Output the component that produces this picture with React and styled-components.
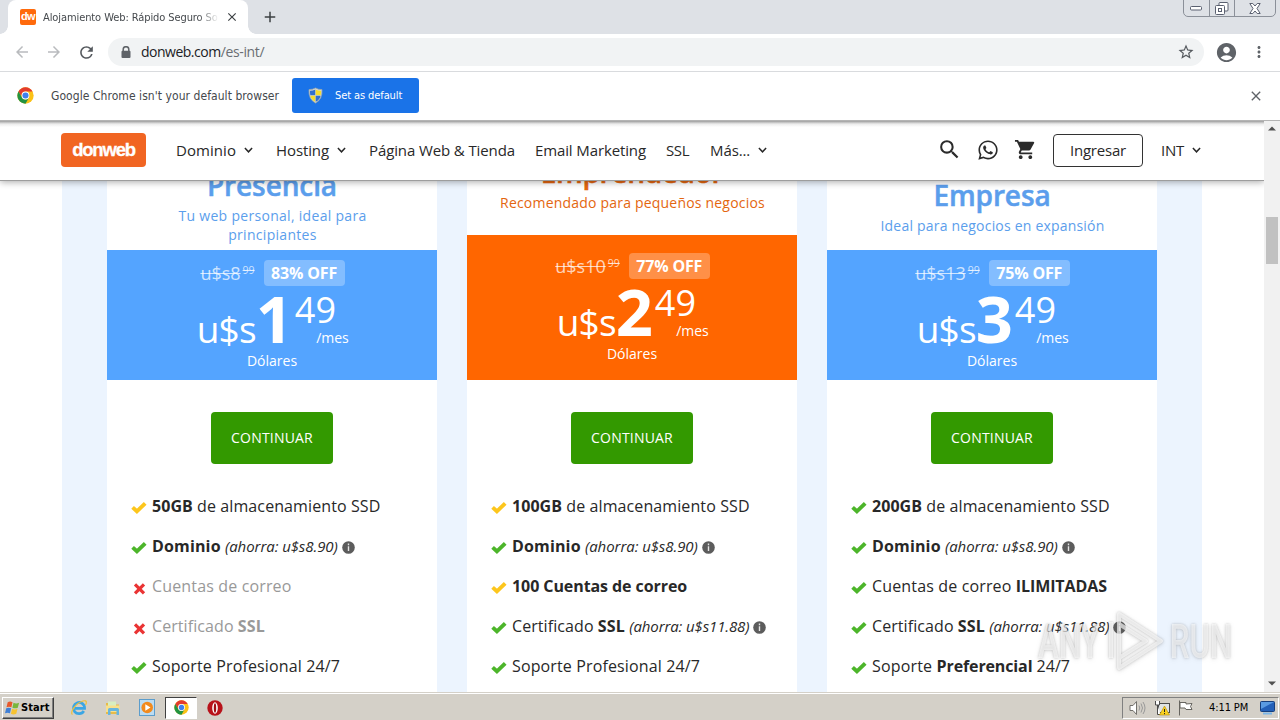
import React from "react";
import styled, { createGlobalStyle } from "styled-components";
import {
  MdSearch, MdShoppingCart, MdRefresh, MdStarBorder, MdAccountCircle,
  MdMoreVert, MdClose, MdArrowBack, MdArrowForward, MdAdd,
} from "react-icons/md";
import { FaWhatsapp } from "react-icons/fa";

const GlobalStyle = createGlobalStyle`
  * { box-sizing: border-box; }
  body { margin: 0; background: #fff; overflow: hidden; font-family: "Open Sans", sans-serif; color: #282828; }
  svg { display: block; flex: none; }
`;

const ui = `"DejaVu Sans Condensed", "DejaVu Sans", sans-serif`;

const Screen = styled.div`
  position: relative;
  width: 1280px;
  height: 720px;
  display: flex;
  flex-direction: column;
  overflow: hidden;
`;

const Label = styled.span`
  white-space: pre;
  letter-spacing: ${(p) => p.$ls || 0}px;
`;

/* ---------- browser chrome ---------- */
const TabStrip = styled.div`
  height: 34px;
  flex: none;
  background: #dee1e6;
  display: flex;
  align-items: flex-start;
  padding-left: 8px;
`;
const Tab = styled.div`
  position: relative;
  width: 240px;
  height: 34px;
  background: #fff;
  border-radius: 8px 8px 0 0;
  display: flex;
  align-items: center;
  padding-left: 12px;
  font: 11px ${ui};
  color: #45494d;
  &::before, &::after {
    content: "";
    position: absolute;
    bottom: 0;
    width: 8px;
    height: 8px;
  }
  &::before { left: -8px; background: radial-gradient(circle at 0 0, transparent 7.5px, #fff 8px); }
  &::after { right: -8px; background: radial-gradient(circle at 100% 0, transparent 7.5px, #fff 8px); }
`;
const Favicon = styled.div`
  width: 16px;
  height: 16px;
  border-radius: 2px;
  background: #ff6a0c;
  color: #fff;
  font: bold 11px/15px "Liberation Sans", sans-serif;
  letter-spacing: -0.6px;
  text-align: center;
`;
const TabTitle = styled.div`
  width: 175px;
  margin: 0 7px;
  overflow: hidden;
  white-space: nowrap;
  letter-spacing: -0.09px;
  mask-image: linear-gradient(90deg, #000 155px, transparent 176px);
`;
const NewTab = styled.div`
  margin: 8px 0 0 13px;
  color: #3c4043;
`;
const WindowButtons = styled.div`
  margin: -1px 4px 0 auto;
  height: 18px;
  display: flex;
  border: 1px solid #8b9099;
  border-radius: 0 0 5px 5px;
  color: #5a6070;
`;
const WindowButton = styled.div`
  width: ${(p) => p.$w}px;
  display: flex;
  align-items: center;
  justify-content: center;
  & + & { border-left: 1px solid #8b9099; }
`;
const Toolbar = styled.div`
  height: 38px;
  flex: none;
  display: flex;
  align-items: center;
  padding: 0 12px 1px 13px;
  border-bottom: 1px solid #d9dbde;
  color: #5f6368;
`;
const NavButtons = styled.div`
  display: flex;
  gap: 14px;
  width: 95px;
  color: #b9bbbe;
  svg:last-child { color: #55595e; }
`;
const Omnibox = styled.div`
  width: 1096px;
  height: 28px;
  border-radius: 14px;
  background: #f1f3f4;
  display: flex;
  align-items: center;
  padding: 0 9px 0 13px;
  font-size: 14px;
  color: #202124;
  svg:last-child { margin-left: auto; }
`;
const Url = styled.div`
  margin-left: 10px;
  padding-bottom: 1px;
  letter-spacing: -0.5px;
  white-space: nowrap;
`;
const Path = styled.span`
  color: #6a6e73;
  letter-spacing: -0.35px;
`;
const InfoBar = styled.div`
  height: 49px;
  flex: none;
  display: flex;
  align-items: center;
  padding: 0 16px 1px 17px;
  border-bottom: 1px solid #b4b4b4;
  font: 12px ${ui};
  color: #45484c;
  svg:last-child { margin-left: auto; }
`;
const DefaultButton = styled.div`
  width: 127px;
  height: 35px;
  margin-left: 13px;
  border-radius: 3px;
  background: #1a73e8;
  color: #fff;
  display: flex;
  align-items: center;
  gap: 12px;
  padding-left: 16px;
  font-size: 11px;
`;
const Ml = styled.div`
  margin-left: ${(p) => p.$x}px;
  display: flex;
`;

/* ---------- web page ---------- */
const Viewport = styled.div`
  height: 571px;
  flex: none;
  display: flex;
`;
const Page = styled.div`
  width: 1264px;
  display: flex;
  flex-direction: column;
  overflow: hidden;
`;
const SiteNav = styled.div`
  position: relative;
  z-index: 1;
  height: 60px;
  flex: none;
  background: linear-gradient(#9b9b9b 0, #b9b9b9 1px, #ececec 3px, #fff 6px);
  border-bottom: 1px solid #9d9d9d;
  box-shadow: 0 1px 7px rgba(0, 0, 0, 0.35);
  display: flex;
  align-items: center;
  padding: 0 0 2px 61px;
  font-size: 15px;
`;
const Logo = styled.div`
  width: 85px;
  height: 34px;
  margin-right: 30px;
  border-radius: 4px;
  background: #f16522;
  color: #fff;
  font: bold 18.5px/33px "Liberation Sans", sans-serif;
  -webkit-text-stroke: 0.3px #fff;
  letter-spacing: -1.2px;
  text-align: center;
`;
const NavItem = styled.div`
  width: ${(p) => p.$w}px;
  display: flex;
  align-items: center;
  gap: 8px;
`;
const NavIcons = styled.div`
  margin-left: auto;
  display: flex;
  align-items: center;
  gap: 15px;
  color: #2b2b2b;
`;
const Login = styled.div`
  width: 90px;
  height: 33px;
  margin: 2px 18px 0 16px;
  border: 1px solid #333;
  border-radius: 4px;
  text-align: center;
  line-height: 30px;
`;
const Plans = styled.div`
  width: 1140px;
  height: 511px;
  flex: none;
  margin-left: 62px;
  padding: 0 45px;
  background: #ecf4fe;
  display: flex;
  gap: 30px;
`;
const Card = styled.div`
  width: 330px;
  background: #fff;
  display: flex;
  flex-direction: column;
  align-items: center;
`;
const CardHead = styled.div`
  width: 100%;
  height: ${(p) => p.$h}px;
  padding-bottom: ${(p) => p.$pb}px;
  flex: none;
  display: flex;
  flex-direction: column;
  align-items: center;
  justify-content: flex-end;
  text-align: center;
  color: ${(p) => p.$color};
`;
const PlanName = styled.div`
  font-size: 28px;
  font-weight: 600;
  line-height: 36px;
  padding-bottom: 3px;
  letter-spacing: ${(p) => p.$ls}px;
  -webkit-text-stroke: 0.5px currentColor;
`;
const Tagline = styled.div`
  font-size: 14px;
  line-height: 19px;
  padding-left: 1px;
  letter-spacing: ${(p) => p.$ls}px;
  white-space: pre-line;
`;
const PriceBox = styled.div`
  width: 100%;
  height: ${(p) => p.$h}px;
  padding-top: ${(p) => p.$pt}px;
  flex: none;
  background: ${(p) => p.$bg};
  color: #fff;
  display: flex;
  flex-direction: column;
  align-items: center;
`;
const OldRow = styled.div`
  display: flex;
  align-items: center;
  gap: 9px;
  height: 26px;
  padding-left: 1px;
`;
const OldPrice = styled.div`
  display: flex;
  font-size: 18px;
  line-height: 26px;
  color: rgba(255, 255, 255, 0.72);
  text-decoration: line-through;
`;
const OldCents = styled.span`
  font-size: 10.5px;
  line-height: 20px;
  padding-left: 2px;
`;
const Discount = styled.div`
  width: 81px;
  height: 26px;
  border-radius: 4px;
  background: rgba(255, 255, 255, 0.28);
  font-size: 16px;
  font-weight: bold;
  line-height: 26px;
  letter-spacing: -0.17px;
  text-align: center;
`;
const NewPrice = styled.div`
  display: flex;
  align-items: baseline;
  height: 65px;
  padding-left: 1.5px;
`;
const Currency = styled.span`
  font-size: 37px;
  letter-spacing: -0.8px;
`;
const Whole = styled.span`
  width: 39px;
  font-size: 65px;
  font-weight: bold;
  line-height: 64px;
`;
const Fraction = styled.div`
  align-self: flex-start;
  padding-top: 5px;
  width: 54px;
  display: flex;
  flex-direction: column;
  font-size: 36px;
  line-height: 37px;
`;
const Period = styled.span`
  align-self: flex-end;
  margin-top: 2px;
  font-size: 14px;
  line-height: 16px;
`;
const Money = styled.div`
  font-size: 14px;
  line-height: 20px;
`;
const Cta = styled.div`
  width: 122px;
  height: 52px;
  margin: 32px 0 22px;
  flex: none;
  border-radius: 4px;
  background: #339900;
  color: #fff;
  font-size: 14px;
  line-height: 52px;
  letter-spacing: 0.2px;
  text-align: center;
`;
const Features = styled.div`
  align-self: stretch;
  padding-left: 24px;
`;
const Feature = styled.div`
  height: 40px;
  display: flex;
  align-items: center;
  font-size: 16px;
  white-space: pre;
  color: ${(p) => (p.$off ? "#999" : "#282828")};
`;
const Mark = styled.div`
  width: 21px;
  padding-top: 3px;
`;
const Strong = styled.b`
  letter-spacing: ${(p) => p.$ls || 0}px;
`;
const Saving = styled.i`
  font-size: 15px;
  letter-spacing: ${(p) => p.$ls || -0.08}px;
  padding-right: 4px;
`;
const ScrollBar = styled.div`
  width: 16px;
  background: #f1f1f1;
  display: flex;
  flex-direction: column;
  justify-content: space-between;
  padding: 5px 0 6px;
  align-items: center;
`;
const Thumb = styled.div`
  width: 12px;
  height: 47px;
  margin: 86px 2px auto;
  background: #c1c1c1;
`;

/* ---------- taskbar ---------- */
const Taskbar = styled.div`
  height: 28px;
  flex: none;
  background: #d4d0c8;
  border-top: 1px solid #d4d0c8;
  box-shadow: inset 0 1px 0 #fff;
  display: flex;
  align-items: center;
  padding: 2px 1px 0 2px;
`;
const Start = styled.div`
  width: 52px;
  height: 22px;
  border: 1px solid;
  border-color: #fff #404040 #404040 #fff;
  box-shadow: inset -1px -1px 0 #808080;
  display: flex;
  align-items: center;
  padding-left: 1px;
  font: bold 11px ${ui};
  letter-spacing: 0.1px;
  color: #000;
`;
const Task = styled.div`
  width: ${(p) => (p.$active ? 32 : 16)}px;
  height: 22px;
  margin-left: ${(p) => p.$x}px;
  display: flex;
  align-items: center;
  justify-content: center;
  border: ${(p) => (p.$active ? "1px solid" : "0")};
  border-color: #404040 #fff #fff #404040;
  background: ${(p) => (p.$active ? "#fff" : "none")};
`;
const Tray = styled.div`
  width: 157px;
  height: 22px;
  margin-left: auto;
  border: 1px solid;
  border-color: #808080 #fff #fff #808080;
  display: flex;
  align-items: center;
  gap: 8px;
  padding-left: 6px;
  font: 11px ${ui};
  color: #000;
`;
const Clock = styled.div`
  margin-left: 7px;
  width: 43px;
  white-space: nowrap;
  letter-spacing: -0.1px;
`;

/* ---------- watermark ---------- */
const Watermark = styled.div`
  position: absolute;
  left: 1038px;
  top: 606px;
  width: 194px;
  height: 70px;
  display: flex;
  align-items: center;
  justify-content: space-between;
  color: rgba(255, 255, 255, 0.6);
  filter: drop-shadow(0 0 1px rgba(90, 90, 90, 0.45)) drop-shadow(0 1px 2px rgba(90, 90, 90, 0.25));
`;
const Word = styled.div`
  width: 64px;
  font: 500 48px/70px Roboto, sans-serif;
  padding-top: 2px;
  transform: scaleX(0.65);
  transform-origin: ${(p) => (p.$right ? "100%" : "0")} 50%;
  direction: ${(p) => (p.$right ? "rtl" : "ltr")};
`;

/* ---------- icons ---------- */
const Chevron = () => (
  <svg width="9" height="8" viewBox="0 0 9 8" fill="none" stroke="#282828" strokeWidth="1.5"><path d="M.9 2 4.5 5.8 8.1 2" /></svg>
);
const Lock = () => (
  <svg width="10" height="13" viewBox="0 0 10 13"><path d="M2.200 6V3.500a2.800 2.800 0 0 1 5.600 0V6" fill="none" stroke="#5f6368" strokeWidth="1.500" /><rect x=".5" y="4.800" width="9" height="7.200" rx="1" fill="#5f6368" /></svg>
);
const Chrome = ({ size = 17 }) => (
  <svg width={size} height={size} viewBox="0 0 48 48">
    <circle cx="24" cy="24" r="23" fill="#fbc116" />
    <path d="M4.1 12.5A23 23 0 0 1 43.9 12.5H24a11.5 11.5 0 0 0-10 17.2Z" fill="#e33b2e" />
    <path d="M4.1 12.5 14 29.7a11.5 11.5 0 0 0 20 0L24 47A23 23 0 0 1 4.1 12.5Z" fill="#229342" />
    <circle cx="24" cy="24" r="11" fill="#fff" />
    <circle cx="24" cy="24" r="8.6" fill="#3f80ed" />
  </svg>
);
const Shield = () => (
  <svg width="15" height="17" viewBox="0 0 15 17">
    <path d="M7.500 1Q10 2.600 14 2.600 14.600 12.500 7.500 16 .400 12.500 1 2.600 5 2.600 7.500 1Z" fill="#d5d9dd" stroke="#9aa7a6" strokeWidth=".8" />
    <path d="M7.300 2.600V8.300H2.300Q1.900 6 2 3.800 5 3.800 7.300 2.600Z" fill="#2f6fd0" />
    <path d="M7.700 2.600V8.300h5Q13.100 6 13 3.800 10 3.800 7.700 2.600Z" fill="#f4dc2e" />
    <path d="M7.300 8.700v6.100Q3.200 12.700 2.400 8.700Z" fill="#f4dc2e" />
    <path d="M7.700 8.700v6.100q4.100-2.100 4.900-6.100Z" fill="#2f6fd0" />
  </svg>
);
const Check = ({ color }) => (
  <svg width="16" height="14" viewBox="0 0 16 14" fill="none" stroke={color} strokeWidth="3.900"><path d="M1.600 6.400 5.900 10.300 14.200 2.300" /></svg>
);
const Cross = () => (
  <svg width="16" height="14" viewBox="0 0 16 14" fill="none" stroke="#ea3434" strokeWidth="3.200"><path d="m4 3.300 9 9M13 3.300 4 12.300" /></svg>
);
const Info = () => (
  <svg width="13" height="13" viewBox="0 0 13 13" style={{ marginTop: 2 }}>
    <circle cx="6.500" cy="6.500" r="6.300" fill="#5c5c5c" />
    <path d="M6.500 2.600v1.600M6.500 5.300v4.700" stroke="#e4e4e4" strokeWidth="1.400" />
  </svg>
);
const WinFlag = () => (
  <svg width="17" height="16" viewBox="0 0 16 16">
    <path d="M3.200 2.200Q5.600.8 8 2.200L6.900 7.300Q4.500 6 2 7.300Z" fill="#e8592b" />
    <path d="M9 2.700q2.600 1.400 5.600 0l-1.300 5Q10.500 9 7.900 7.700Z" fill="#79b63c" />
    <path d="M1.700 8.300q2.500-1.300 4.900 0L5.500 13.300Q3 12 .5 13.300Z" fill="#3f7fd6" />
    <path d="M7.600 8.700q2.600 1.400 5.400 0l-1.200 5q-2.900 1.400-5.400 0Z" fill="#f7c331" />
  </svg>
);
const Ie = () => (
  <svg width="18" height="18" viewBox="0 0 18 18" fill="none">
    <path d="M13.800 12A5.600 5.600 0 1 1 14.600 9.400H5" stroke="#3ba6e4" strokeWidth="2.700" />
    <path d="M2.500 15.500C-.5 14 5 4.500 13 2c4.500-1.200 3.500 2.500 2.500 4" stroke="#eebf3a" strokeWidth="1.200" />
  </svg>
);
const Explorer = () => (
  <svg width="16" height="16" viewBox="0 0 16 16">
    <path d="M1 3h5l1 1.500h7V14H1Z" fill="#e6bb4a" /><path d="M3 1.500h8V8H3Z" fill="#d8eec0" />
    <path d="M1 5.500h13.500V12H1Z" fill="#f8e08c" /><path d="M3 15V9.500Q3 8 4.500 8h8Q14 8 14 9.500V15h-2.500v-4h-6v4Z" fill="#66b5df" />
  </svg>
);
const Player = () => (
  <svg width="17" height="17" viewBox="0 0 17 17">
    <rect x=".5" y=".5" width="15" height="16" fill="#bcdcf2" stroke="#5c9dcc" />
    <circle cx="8.200" cy="8.500" r="5.800" fill="#f28a1d" /><path d="m6.300 5.200 5.200 3.300-5.200 3.300Z" fill="#fff" />
  </svg>
);
const Opera = () => (
  <svg width="16" height="16" viewBox="0 0 16 16">
    <circle cx="8" cy="8" r="7.700" fill="#b8121a" /><ellipse cx="8" cy="8" rx="2.800" ry="5.700" fill="#fff" />
    <ellipse cx="8" cy="8" rx="1.200" ry="4.800" fill="#a00d14" />
  </svg>
);
const Speaker = () => (
  <svg width="17" height="16" viewBox="0 0 17 16" fill="none" stroke="#73716c">
    <path d="M1 5.500h3l3.500-4v13L4 10.500H1Z" fill="#fff" /><path d="M10 5.500q1.500 2.500 0 5M12 3.500q3 4.500 0 9M14 2q4 6 0 12" stroke="#999" />
  </svg>
);
const Network = () => (
  <svg width="16" height="16" viewBox="0 0 16 16">
    <rect x="4.500" y="3.500" width="11" height="9" fill="#dfe3e4" stroke="#4b4b4b" />
    <path d="M1.500 1v4h4V1M3.500 5v9.500h3" fill="#fff" stroke="#4b4b4b" />
    <path d="m10.500 6 5 9h-10Z" fill="#f9d01f" stroke="#b68d0a" strokeWidth=".6" /><path d="M10.500 9v3M10.500 13v1.200" stroke="#222" />
  </svg>
);
const Flag = () => (
  <svg width="16" height="16" viewBox="0 0 16 16" fill="#fff" stroke="#66645f">
    <path d="M1.500.5v15M2 2.500h6v1.500l6-.5-1.500 3L14 9.500H8L7 8H2Z" />
  </svg>
);
const Desktop = () => (
  <svg width="15" height="14" viewBox="0 0 15 14">
    <rect x=".5" y=".5" width="14" height="10" rx="1" fill="#2360b8" stroke="#173f7c" />
    <path d="M1 1h13L1 8Z" fill="#5a9be2" /><path d="M3 12.500h9" stroke="#7cb7e8" strokeWidth="2" />
  </svg>
);
const Arrow = ({ up }) => (
  <svg width="8" height="5" viewBox="0 0 8 5"><path d={up ? "M0 4.500 4 .5 8 4.500Z" : "M0 .5 4 4.500 8 .5Z"} fill="#505050" /></svg>
);

const BLUE = "#54a4ff";
const GREEN = "#4cb52a";
const YELLOW = "#fdc61c";

const domain = { mark: GREEN, text: <><Strong $ls={0.15}>Dominio </Strong><Saving>(ahorra: u$s8.90)</Saving><Info /></> };
const ssl = { mark: GREEN, text: <><Label $ls={0.08}>Certificado </Label><Strong $ls={0.15}>SSL </Strong><Saving $ls={-0.12}>(ahorra: u$s11.88)</Saving><Info /></> };
const Disk = ({ size }) => <><Strong $ls={0.05}>{size}</Strong><Label $ls={0.1}> de almacenamiento SSD</Label></>;

const plans = [
  {
    name: "Presencia", nameLs: -0.1, tag: "Tu web personal, ideal para\nprincipiantes", tagLs: 0.3, headH: 69, headPb: 6,
    headColor: "#5b9eec", bg: BLUE, boxH: 130, boxPt: 10, old: "u$s8", off: "83% OFF", whole: "1",
    features: [
      { mark: YELLOW, text: <Disk size="50GB" /> },
      domain,
      { off: true, text: <Label $ls={0.15}>Cuentas de correo</Label> },
      { off: true, text: <><Label $ls={0.08}>Certificado </Label><Strong $ls={0.15}>SSL</Strong></> },
      { mark: GREEN, text: <Label $ls={0.13}>Soporte Profesional 24/7</Label> },
    ],
  },
  {
    name: "Emprendedor", nameLs: -0.3, tag: "Recomendado para pequeños negocios", tagLs: 0.2, headH: 54, headPb: 23,
    headColor: "#e4660f", bg: "#ff6600", boxH: 145, boxPt: 18, old: "u$s10", off: "77% OFF", whole: "2",
    features: [
      { mark: YELLOW, text: <Disk size="100GB" /> },
      domain,
      { mark: YELLOW, text: <Strong $ls={-0.08}>100 Cuentas de correo</Strong> },
      ssl,
      { mark: GREEN, text: <Label $ls={0.13}>Soporte Profesional 24/7</Label> },
    ],
  },
  {
    name: "Empresa", nameLs: -0.1, tag: "Ideal para negocios en expansión", tagLs: 0.2, headH: 69, headPb: 15,
    headColor: "#5b9eec", bg: BLUE, boxH: 130, boxPt: 10, old: "u$s13", off: "75% OFF", whole: "3",
    features: [
      { mark: GREEN, text: <Disk size="200GB" /> },
      domain,
      { mark: GREEN, text: <><Label $ls={0.15}>Cuentas de correo </Label><Strong $ls={-0.1}>ILIMITADAS</Strong></> },
      ssl,
      { mark: GREEN, text: <><Label $ls={0.17}>Soporte </Label><Strong $ls={-0.12}>Preferencial</Strong><span> 24/7</span></> },
    ],
  },
];

const menu = [
  { text: "Dominio", w: 100, ls: 0.06, drop: true },
  { text: "Hosting", w: 93, ls: -0.1, drop: true },
  { text: "Página Web & Tienda", w: 166, ls: -0.11 },
  { text: "Email Marketing", w: 131, ls: -0.12 },
  { text: "SSL", w: 44, ls: -0.4 },
  { text: "Más...", w: 60, ls: -0.1, drop: true },
];

const Plan = ({ p }) => (
  <Card>
    <CardHead $h={p.headH} $pb={p.headPb} $color={p.headColor}>
      <PlanName $ls={p.nameLs}>{p.name}</PlanName>
      <Tagline $ls={p.tagLs}>{p.tag}</Tagline>
    </CardHead>
    <PriceBox $h={p.boxH} $pt={p.boxPt} $bg={p.bg}>
      <OldRow>
        <OldPrice>{p.old}<OldCents>99</OldCents></OldPrice>
        <Discount>{p.off}</Discount>
      </OldRow>
      <NewPrice>
        <Currency>u$s</Currency>
        <Whole>{p.whole}</Whole>
        <Fraction>49<Period>/mes</Period></Fraction>
      </NewPrice>
      <Money>Dólares</Money>
    </PriceBox>
    <Cta>CONTINUAR</Cta>
    <Features>
      {p.features.map((f, i) => (
        <Feature key={i} $off={f.off}>
          <Mark>{f.off ? <Cross /> : <Check color={f.mark} />}</Mark>
          {f.text}
        </Feature>
      ))}
    </Features>
  </Card>
);

export default function App() {
  return (
    <Screen>
      <GlobalStyle />
      <TabStrip>
        <Tab>
          <Favicon>dw</Favicon>
          <TabTitle>Alojamiento Web: Rápido Seguro So</TabTitle>
          <MdClose size={14} color="#3c4043" />
        </Tab>
        <NewTab><MdAdd size={18} /></NewTab>
        <WindowButtons>
          <WindowButton $w={25}>
            <svg width="13" height="5" viewBox="0 0 13 5"><rect x=".5" y=".5" width="11" height="3.500" rx="1" fill="#fff" stroke="#5a6070" /></svg>
          </WindowButton>
          <WindowButton $w={25}>
            <svg width="14" height="13" viewBox="0 0 14 13" fill="#fff" stroke="#5a6070"><rect x="4" y=".5" width="9" height="8.500" rx="1" /><rect x=".5" y="3.500" width="9" height="9" rx="1" /><rect x="3.500" y="6.500" width="3" height="3" /></svg>
          </WindowButton>
          <WindowButton $w={41}>
            <svg width="12" height="11" viewBox="0 0 12 11" fill="#fff" stroke="#5a6070"><path d="M.8.500h3L6 3 8.200.500h3L8 5.500l3.200 5h-3L6 8l-2.200 2.500h-3L4 5.500Z" /></svg>
          </WindowButton>
        </WindowButtons>
      </TabStrip>
      <Toolbar>
        <NavButtons><MdArrowBack size={18} /><MdArrowForward size={18} /><MdRefresh size={19} /></NavButtons>
        <Omnibox>
          <Lock />
          <Url>donweb.com<Path>/es-int/</Path></Url>
          <MdStarBorder size={18} color="#55595e" />
        </Omnibox>
        <Ml $x={11}><MdAccountCircle size={23} /></Ml>
        <Ml $x={12}><MdMoreVert size={18} /></Ml>
      </Toolbar>
      <InfoBar>
        <Chrome />
        <Ml $x={17}><Label $ls={0.06}>Google Chrome isn't your default browser</Label></Ml>
        <DefaultButton>
          <Ml $x={0}><Shield /></Ml>
          <Label $ls={-0.1}>Set as default</Label>
        </DefaultButton>
        <MdClose size={16} color="#5f6368" />
      </InfoBar>
      <Viewport>
        <Page>
          <SiteNav>
            <Logo>donweb</Logo>
            {menu.map((m) => (
              <NavItem key={m.text} $w={m.w}><Label $ls={m.ls}>{m.text}</Label>{m.drop && <Chevron />}</NavItem>
            ))}
            <NavIcons><MdSearch size={25} /><FaWhatsapp size={22} /><MdShoppingCart size={23} /></NavIcons>
            <Login><Label $ls={-0.2}>Ingresar</Label></Login>
            <NavItem $w={103}><Label $ls={-0.2}>INT</Label><Chevron /></NavItem>
          </SiteNav>
          <Plans>{plans.map((p) => <Plan key={p.name} p={p} />)}</Plans>
        </Page>
        <ScrollBar><Arrow up /><Thumb /><Arrow /></ScrollBar>
      </Viewport>
      <Taskbar>
        <Start><WinFlag />Start</Start>
        <Task $x={17}><Ie /></Task>
        <Task $x={18}><Explorer /></Task>
        <Task $x={18}><Player /></Task>
        <Task $x={10} $active><Chrome size={15} /></Task>
        <Task $x={10}><Opera /></Task>
        <Tray><Speaker /><Network /><Flag /><Clock>4:11 PM</Clock><Desktop /></Tray>
      </Taskbar>
      <Watermark>
        <Word>ANY</Word>
        <svg width="62" height="66" viewBox="0 0 62 66" fill="none" stroke="rgba(255,255,255,.65)" strokeWidth="4" strokeLinejoin="round">
          <path d="M7 14V50M15 12v42M15 6 57 33 15 60V50L42 33 15 16Z" />
        </svg>
        <Word $right>RUN</Word>
      </Watermark>
    </Screen>
  );
}
